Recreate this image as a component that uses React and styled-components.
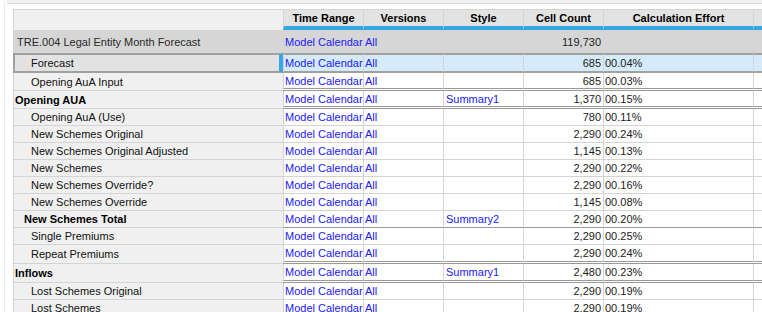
import React from 'react';
import styled, { createGlobalStyle, css } from 'styled-components';

const Global = createGlobalStyle`
  html, body { margin: 0; padding: 0; background: #fff; overflow: hidden; }
  body { font-family: "Liberation Sans", Arial, sans-serif; font-size: 11px; color: #222; }
`;

const COLS = '270px 80px 80px 80px 80px 150px 1fr';
const LINE = '#d4d4d4';
const DARK = '#a0a0a0';
const BLUE = '#35a7e4';
const LINK = '#2020ff';

const Frame = styled.div`
  margin-left: 4px;
  border-left: 1px solid #ececec;
  height: 312px;
`;

const TopStrip = styled.div`
  margin-left: 2px;
  height: 3px;
  background: #f0f0f0;
  border-bottom: 1px solid #d9d9d9;
`;

const Table = styled.div`
  margin: 5px 0 0 8px;
  width: 760px;
  border-top: 1px solid ${LINE};
`;

const Row = styled.div`
  display: grid;
  grid-template-columns: ${COLS};
  height: ${p => p.$h}px;
`;

const HeadName = styled.div`
  background: #f0f0f0;
  border-left: 1px solid ${LINE};
`;

const HeadCell = styled.div`
  background: #e3e3e3;
  border-left: 1px solid ${LINE};
  border-bottom: 4px solid ${BLUE};
  display: flex;
  align-items: center;
  justify-content: center;
  font-weight: bold;
  color: #000;
  white-space: nowrap;
  overflow: hidden;
`;

const sepStyles = {
  thin: css`border-bottom: 1px solid ${LINE};`,
  dark: css`border-bottom: 1px solid #9a9a9a;`,
  double: css`border-bottom: 3px double #999;`,
  focus: css`border-top: 2px solid ${DARK}; border-bottom: 2px solid ${DARK};`,
  none: css``,
};

const NameCell = styled.div`
  display: flex;
  align-items: center;
  padding-left: ${p => p.$indent}px;
  white-space: nowrap;
  overflow: hidden;
  background: ${p => (p.$root ? '#d6d6d6' : '#f0f0f0')};
  border-left: 1px solid ${LINE};
  border-bottom: ${p => (p.$root ? 'none' : `1px solid ${LINE}`)};
  color: ${p => (p.$bold ? '#000' : p.$root ? '#2a2a2a' : '#111')};
  font-weight: ${p => (p.$bold ? 'bold' : 'normal')};
  ${p => p.$focus && css`
    background: #e2e2e2;
    border: 2px solid ${DARK};
    border-right: 4px solid ${BLUE};
  `}
`;

const DataCell = styled.div`
  display: flex;
  align-items: center;
  justify-content: ${p => (p.$right ? 'flex-end' : 'flex-start')};
  padding: 0 ${p => (p.$right ? 2 : 0)}px 0 ${p => (p.$right ? 0 : p.$pad ?? 1)}px;
  white-space: nowrap;
  overflow: hidden;
  background: ${p => (p.$root ? '#d6d6d6' : p.$focus ? '#d5ebfa' : '#fff')};
  border-left: 1px solid ${LINE};
  color: ${p => (p.$link ? LINK : '#222')};
  ${p => sepStyles[p.$sep]}
`;

const rows = [
  { name: 'TRE.004 Legal Entity Month Forecast', root: true, h: 23, indent: 3, sep: 'none', count: '119,730', effort: '' },
  { name: 'Forecast', focus: true, h: 20, indent: 16, sep: 'focus', count: '685', effort: '00.04%' },
  { name: 'Opening AuA Input', h: 18, indent: 17, sep: 'double', count: '685', effort: '00.03%' },
  { name: 'Opening AUA', bold: true, h: 18, indent: 1, sep: 'double', style: 'Summary1', count: '1,370', effort: '00.15%' },
  { name: 'Opening AuA (Use)', count: '780', effort: '00.11%' },
  { name: 'New Schemes Original', count: '2,290', effort: '00.24%' },
  { name: 'New Schemes Original Adjusted', count: '1,145', effort: '00.13%' },
  { name: 'New Schemes', count: '2,290', effort: '00.22%' },
  { name: 'New Schemes Override?', count: '2,290', effort: '00.16%' },
  { name: 'New Schemes Override', count: '1,145', effort: '00.08%' },
  { name: 'New Schemes Total', bold: true, indent: 10, sep: 'dark', style: 'Summary2', count: '2,290', effort: '00.20%' },
  { name: 'Single Premiums', count: '2,290', effort: '00.25%' },
  { name: 'Repeat Premiums', h: 19, sep: 'double', count: '2,290', effort: '00.24%' },
  { name: 'Inflows', bold: true, h: 19, indent: 1, sep: 'double', style: 'Summary1', count: '2,480', effort: '00.23%' },
  { name: 'Lost Schemes Original', count: '2,290', effort: '00.19%' },
  { name: 'Lost Schemes', count: '2,290', effort: '00.19%' },
];

const headers = ['Time Range', 'Versions', 'Style', 'Cell Count', 'Calculation Effort', ''];

export default function App() {
  return (
    <>
      <Global />
      <Frame>
        <TopStrip />
        <Table>
          <Row $h={20}>
            <HeadName />
            {headers.map((h, i) => (
              <HeadCell key={i}>{h}</HeadCell>
            ))}
          </Row>
          {rows.map((r, i) => {
            const sep = r.sep || 'thin';
            const common = { $sep: sep, $root: r.root, $focus: r.focus };
            return (
              <Row key={i} $h={r.h || 17}>
                <NameCell $indent={r.indent ?? 17} $bold={r.bold} $root={r.root} $focus={r.focus}>
                  {r.name}
                </NameCell>
                <DataCell {...common} $link>Model Calendar</DataCell>
                <DataCell {...common} $link>All</DataCell>
                <DataCell {...common} $link $pad={2}>{r.style || ''}</DataCell>
                <DataCell {...common} $right>{r.count}</DataCell>
                <DataCell {...common}>{r.effort}</DataCell>
                <DataCell {...common} />
              </Row>
            );
          })}
        </Table>
      </Frame>
    </>
  );
}
